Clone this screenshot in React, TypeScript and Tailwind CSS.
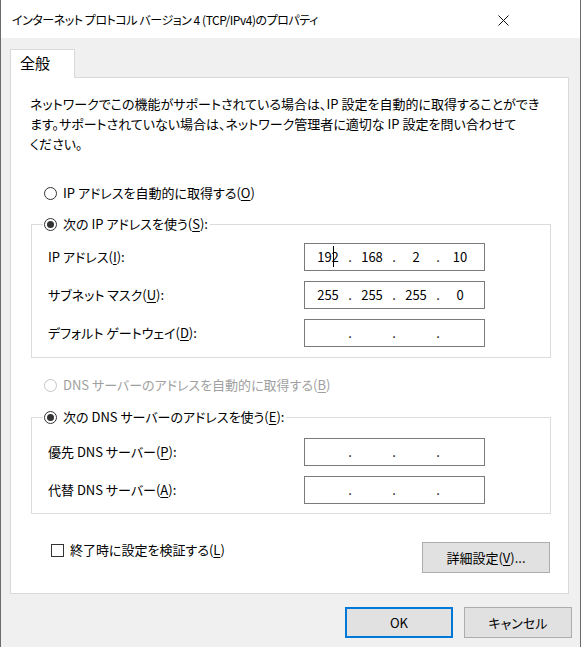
import { Fragment } from "react";

const font = "[font-family:'Noto_Sans_CJK_JP','Noto_Sans',sans-serif] [font-feature-settings:'palt']";

function U({ children }: { children: string }) {
  return <span className="underline underline-offset-2">{children}</span>;
}

function Radio({ checked, disabled }: { checked?: boolean; disabled?: boolean }) {
  return (
    <span
      className={
        disabled
          ? "flex h-[13px] w-[13px] shrink-0 items-center justify-center rounded-full border border-[#c4c4c4] bg-white"
          : "flex h-[13px] w-[13px] shrink-0 items-center justify-center rounded-full border border-[#333333] bg-white"
      }
    >
      {checked && <span className="h-[7px] w-[7px] rounded-full bg-[#333333]" />}
    </span>
  );
}

function IpField({ parts, cursor }: { parts?: string[]; cursor?: boolean }) {
  const p = parts ?? ["", "", "", ""];
  return (
    <div className="relative flex h-[28px] w-[181px] shrink-0 items-center border border-[#7a7a7a] bg-white pl-[7px]">
      {p.map((v, i) => (
        <Fragment key={i}>
          <span className="w-[32px] text-center">{v}</span>
          {i < 3 && <span className="w-[12px] text-center">.</span>}
        </Fragment>
      ))}
      {cursor && <span className="absolute left-[28px] top-[2px] h-[21px] w-px bg-black" />}
    </div>
  );
}

function Row({ label, children }: { label: React.ReactNode; children: React.ReactNode }) {
  return (
    <div className="flex items-center">
      <span className="w-[256px]">{label}</span>
      {children}
    </div>
  );
}

function Button({ children, primary, className }: { children: React.ReactNode; primary?: boolean; className?: string }) {
  return (
    <div
      className={
        (primary
          ? "flex h-[31px] w-[108px] items-center justify-center border-2 border-[#0078d7] bg-[#e1e1e1] "
          : "flex h-[31px] w-[108px] items-center justify-center border border-[#adadad] bg-[#e1e1e1] ") + (className ?? "")
      }
    >
      {children}
    </div>
  );
}

export default function App() {
  return (
    <div className={`flex h-[647px] w-[581px] flex-col border-x border-[#6b6b6b] bg-[#f0f0f0] text-[13px] leading-[20px] text-black ${font}`}>
      <div className="flex h-[38px] shrink-0 items-center justify-between bg-white pl-[11px] pt-[2px]">
        <span className="text-[12px] tracking-[-0.45px]">インターネット プロトコル バージョン 4 (TCP/IPv4)のプロパティ</span>
        <svg width="11" height="11" viewBox="0 0 11 11" className="mr-[71px]">
          <path d="M0.5 0.5 L10.5 10.5 M10.5 0.5 L0.5 10.5" stroke="#111" strokeWidth="1" fill="none" />
        </svg>
      </div>

      <div className="ml-[9px] mt-[11px] flex">
        <div className="relative z-10 -mb-px h-[29px] w-[65px] border border-b-0 border-[#d9d9d9] bg-white pl-[9px] pt-[3px] text-[15px]">
          全般
        </div>
      </div>

      <div className="ml-[9px] flex w-[559px] flex-col border border-[#d9d9d9] bg-white pb-[20px] pt-[16px]">
        <p className="whitespace-nowrap pl-[19px]">
          ネットワークでこの機能がサポートされている場合は、IP 設定を自動的に取得することができ
          <br />
          ます。サポートされていない場合は、ネットワーク管理者に適切な IP 設定を問い合わせて
          <br />
          ください。
        </p>

        <label className="mt-[29px] flex h-[20px] items-center gap-[6px] pl-[33px]">
          <Radio />
          <span>
            IP アドレスを自動的に取得する(<U>O</U>)
          </span>
        </label>

        <fieldset className="ml-[20px] mt-[11px] w-[520px] border border-[#dcdcdc] pb-[10px] pl-[16px] pt-[9px]">
          <legend className="-ml-[5px] flex items-center gap-[6px] bg-white pl-px pr-[2px]">
            <Radio checked />
            <span>
              次の IP アドレスを使う(<U>S</U>):
            </span>
          </legend>
          <div className="flex flex-col gap-[10px]">
            <Row label={<>IP アドレス(<U>I</U>):</>}>
              <IpField parts={["192", "168", "2", "10"]} cursor />
            </Row>
            <Row label={<>サブネット マスク(<U>U</U>):</>}>
              <IpField parts={["255", "255", "255", "0"]} />
            </Row>
            <Row label={<>デフォルト ゲートウェイ(<U>D</U>):</>}>
              <IpField />
            </Row>
          </div>
        </fieldset>

        <label className="mt-[17px] flex h-[20px] items-center gap-[6px] pl-[33px] text-[#a0a0a0]">
          <Radio disabled />
          <span>
            DNS サーバーのアドレスを自動的に取得する(<U>B</U>)
          </span>
        </label>

        <fieldset className="ml-[20px] mt-[12px] w-[520px] border border-[#dcdcdc] pb-[9px] pl-[16px] pt-[11px]">
          <legend className="-ml-[5px] flex items-center gap-[6px] bg-white pl-px pr-[2px]">
            <Radio checked />
            <span>
              次の DNS サーバーのアドレスを使う(<U>E</U>):
            </span>
          </legend>
          <div className="flex flex-col gap-[10px]">
            <Row label={<>優先 DNS サーバー(<U>P</U>):</>}>
              <IpField />
            </Row>
            <Row label={<>代替 DNS サーバー(<U>A</U>):</>}>
              <IpField />
            </Row>
          </div>
        </fieldset>

        <div className="mt-[26px] flex items-start justify-between pl-[40px] pr-[18px]">
          <label className="flex h-[20px] items-center gap-[6px]">
            <span className="h-[13px] w-[13px] border border-[#333333] bg-white" />
            <span>
              終了時に設定を検証する(<U>L</U>)
            </span>
          </label>
          <Button className="mt-[2px] !w-[128px]">
            詳細設定(<U>V</U>)...
          </Button>
        </div>
      </div>

      <div className="mt-[13px] flex justify-end gap-[11px] pr-[8px]">
        <Button primary>OK</Button>
        <Button>キャンセル</Button>
      </div>
    </div>
  );
}
